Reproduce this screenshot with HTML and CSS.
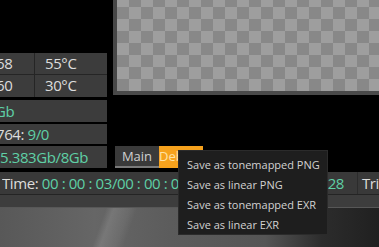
FILE: index.html
```html
<!DOCTYPE html>
<html lang="en">
<head>
    <meta charset="UTF-8">
    <title>Render Stats</title>
    <link rel="stylesheet" href="styles.css">
</head>
<body>
    <div class="app">
        <div class="top">
            <!-- Panel de estadisticas (recortado a la izquierda) -->
            <div class="stats">
                <div class="grid">
                    <div class="cell c1"><span class="cut">68</span></div>
                    <div class="cell c2">55°C</div>
                    <div class="cell c1"><span class="cut">60</span></div>
                    <div class="cell c2">30°C</div>
                </div>
                <div class="cell wide gap3"><span class="cut2 teal">Gb</span></div>
                <div class="cell wide h20"><span class="cut3">764: <span class="teal">9/0</span></span></div>
                <div class="cell wide"><span class="teal">5.383Gb/8Gb</span></div>
            </div>

            <div class="side">
                <div class="preview"></div>
                <div class="tabs">
                    <span class="tab">Main</span>
                    <span class="tab active"><span class="tab-label">Debug</span></span>
                </div>
            </div>
        </div>

        <div class="timebar">
            <div class="tcell">
                <span class="clock">Time: <span class="teal">00 : 00 : 03/00 : 00 : 05 : 44</span></span>
                <span class="teal num">28</span>
            </div>
            <div class="tcell last">Triangles: 2.1M</div>
        </div>
        <div class="strip"></div>
        <div class="scene"></div>

        <!-- Menu contextual -->
        <ul class="menu">
            <li>Save as tonemapped PNG</li>
            <li>Save as linear PNG</li>
            <li>Save as tonemapped EXR</li>
            <li>Save as linear EXR</li>
        </ul>
    </div>
</body>
</html>
```

FILE: styles.css
```css
body {
    margin: 0;
    padding: 0;
    background-color: #000000;
    overflow: hidden;
    font-family: "Open Sans", "Noto Sans", sans-serif;
}

.app {
    position: relative;
    width: 379px;
    height: 247px;
    display: flex;
    flex-direction: column;
    overflow: hidden;
}

.top {
    display: flex;
    height: 172px;
}

/* Panel izquierdo */
.stats {
    width: 107px;
    padding-top: 53px;
    display: flex;
    flex-direction: column;
    gap: 2px;
}

.grid {
    display: grid;
    grid-template-columns: 34px 1fr;
    grid-template-rows: 21px 22px;
    gap: 1px;
    background-color: #252525;
}

.cell {
    background-color: #3c3c3c;
    color: #dcdcdc;
    font-size: 15px;
    line-height: 21px;
    letter-spacing: -0.4px;
    white-space: nowrap;
    overflow: hidden;
}

.c2 {
    padding-left: 10px;
}

.wide {
    height: 22px;
    line-height: 22px;
}

.gap3 {
    margin-top: 1px;
}

.h20 {
    height: 20px;
    line-height: 20px;
}

.cut {
    margin-left: -4px;
}

.cut2 {
    margin-left: -5px;
}

.cut3 {
    margin-left: -4px;
}

.teal {
    color: #5fd0a6;
}

/* Lado derecho: vista previa y pestañas */
.side {
    margin-left: 6px;
    flex: 1;
    display: flex;
    flex-direction: column;
}

.preview {
    height: 91px;
    border-left: 4px solid #474747;
    border-bottom: 4px solid #4a4a4a;
    background-color: #9c9c9c;
    background-image: repeating-conic-gradient(#888888 0 25%, #9e9e9e 0 50%);
    background-size: 24px 24px;
    background-position: 0 -5px;
}

.tabs {
    margin-top: 51px;
    margin-left: 2px;
    display: flex;
}

.tab {
    width: 44px;
    height: 20px;
    box-sizing: content-box;
    border-bottom: 2px solid #7a7a7a;
    background-color: #3a3a3a;
    color: #d0d0d0;
    font-size: 13px;
    line-height: 20px;
    text-align: center;
    overflow: hidden;
}

.tab.active {
    background-color: #f6a21d;
    border-bottom-color: #f6a21d;
    color: #ffe2a6;
    text-align: left;
}

/* el menu tapa el resto de la etiqueta */
.tab-label {
    display: inline-block;
    max-width: 19px;
    overflow: hidden;
    vertical-align: top;
    white-space: nowrap;
}

/* Barra de tiempo */
.timebar {
    height: 22px;
    display: flex;
    background-color: #393939;
    color: #dcdcdc;
    font-size: 15px;
    line-height: 22px;
    letter-spacing: -0.4px;
    white-space: nowrap;
}

.tcell {
    width: 358px;
    display: flex;
    overflow: hidden;
    padding-left: 2px;
    box-sizing: border-box;
    border-right: 1px solid #2c2c2c;
}

.clock {
    max-width: 176px;
    overflow: hidden;
}

.tcell .num {
    margin-left: auto;
    padding-right: 13px;
}

.tcell.last {
    flex: 1;
    width: auto;
    padding-left: 4px;
    border-right: none;
}

.strip {
    height: 12px;
    background-color: #3d3d3d;
    border-top: 1px solid #242424;
    border-bottom: 1px solid #575757;
}

.scene {
    flex: 1;
    background-color: #5a5a5a;
    background-image:
        linear-gradient(110deg, transparent 0 27%, rgba(255, 255, 255, 0.12) 29%, rgba(255, 255, 255, 0.06) 33%, transparent 35%),
        linear-gradient(90deg, #585858 0, #666666 25%, #5c5c5c 45%, #555555 70%, #2c2c2c 85%, #202020 100%);
}

/* Menu contextual */
.menu {
    position: absolute;
    left: 178px;
    top: 150px;
    width: 150px;
    height: 85px;
    margin: 0;
    padding: 4px 0;
    list-style: none;
    background-color: #1e1e1e;
    border: 1px solid #2b2b2b;
    box-sizing: border-box;
}

.menu li {
    height: 20px;
    line-height: 20px;
    padding-left: 8px;
    color: #d2d2d2;
    font-size: 11px;
    white-space: nowrap;
}
```
